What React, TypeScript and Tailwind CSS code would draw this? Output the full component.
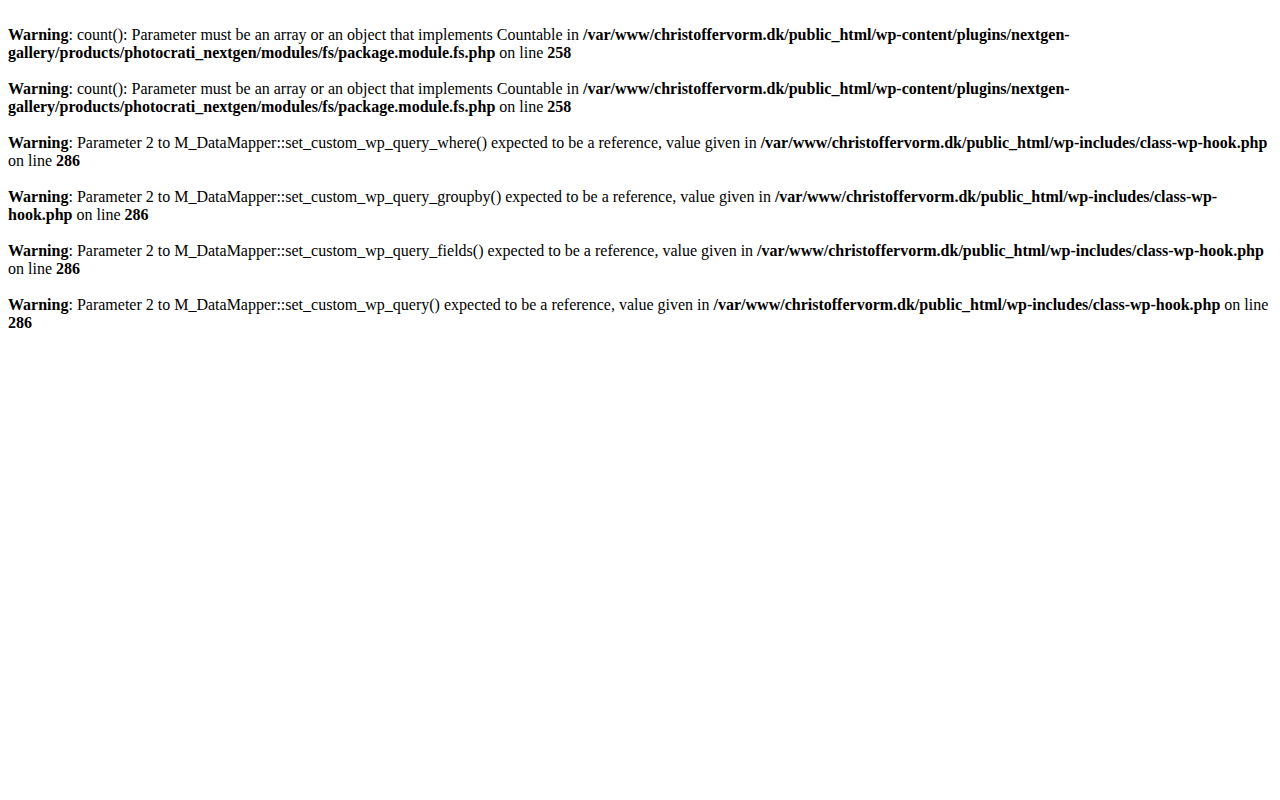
const warnings = [
  {
    msg: ": count(): Parameter must be an array or an object that implements Countable in ",
    file: "/var/www/christoffervorm.dk/public_html/wp-content/plugins/nextgen-gallery/products/photocrati_nextgen/modules/fs/package.module.fs.php",
    line: "258",
  },
  {
    msg: ": count(): Parameter must be an array or an object that implements Countable in ",
    file: "/var/www/christoffervorm.dk/public_html/wp-content/plugins/nextgen-gallery/products/photocrati_nextgen/modules/fs/package.module.fs.php",
    line: "258",
  },
  {
    msg: ": Parameter 2 to M_DataMapper::set_custom_wp_query_where() expected to be a reference, value given in ",
    file: "/var/www/christoffervorm.dk/public_html/wp-includes/class-wp-hook.php",
    line: "286",
  },
  {
    msg: ": Parameter 2 to M_DataMapper::set_custom_wp_query_groupby() expected to be a reference, value given in ",
    file: "/var/www/christoffervorm.dk/public_html/wp-includes/class-wp-hook.php",
    line: "286",
  },
  {
    msg: ": Parameter 2 to M_DataMapper::set_custom_wp_query_fields() expected to be a reference, value given in ",
    file: "/var/www/christoffervorm.dk/public_html/wp-includes/class-wp-hook.php",
    line: "286",
  },
  {
    msg: ": Parameter 2 to M_DataMapper::set_custom_wp_query() expected to be a reference, value given in ",
    file: "/var/www/christoffervorm.dk/public_html/wp-includes/class-wp-hook.php",
    line: "286",
  },
];

export default function App() {
  return (
    <div className="min-h-screen bg-white p-2 font-['Liberation_Serif','Times_New_Roman',serif] text-base leading-[normal] text-black">
      {warnings.map((w, i) => (
        <span key={i}>
          <br />
          <b>Warning</b>
          {w.msg}
          <b>{w.file}</b> on line <b>{w.line}</b>
          <br />
        </span>
      ))}
    </div>
  );
}
